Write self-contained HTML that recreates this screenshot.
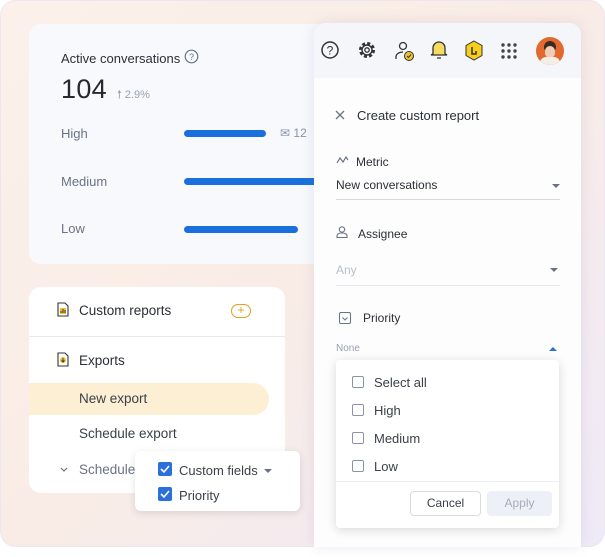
<!DOCTYPE html><html><head><style>
*{box-sizing:border-box;margin:0;padding:0}
body{width:605px;height:557px;background:#fff;font-family:"Liberation Sans",sans-serif;position:relative;overflow:hidden;color:#2b2f36}
.outer{position:absolute;left:0;top:0;width:605px;height:547px;border-radius:16px;background:linear-gradient(135deg,#fbf1ea 0%,#f9ece6 50%,#efeaf8 100%);border:1px solid #ece6ee}
.card1{position:absolute;left:29px;top:24px;width:300px;height:240px;background:#f7f9fd;border-radius:12px}
.abs{position:absolute}
.lbl{font-size:13px;color:#6a7385}
.bar{position:absolute;height:7px;border-radius:4px;background:#1a6fdd}
.card2{position:absolute;left:29px;top:287px;width:256px;height:206px;background:#fff;border-radius:12px}
.panel{position:absolute;left:314px;top:23px;width:267px;height:524px;background:#fdfdfe;border-radius:12px 12px 0 0;box-shadow:0 0 14px rgba(120,110,160,.15);overflow:hidden}
.hdr{height:55px;background:#f4f6fa}
.t13{font-size:13px}
.cb{position:absolute;width:12px;height:12px;border:1.5px solid #8a93a6;border-radius:2px}
.cbx{position:absolute;width:14px;height:14px;background:#2a6fdb;border-radius:2px}
.tri{position:absolute;width:0;height:0;border-left:4px solid transparent;border-right:4px solid transparent}
</style></head><body>
<div class="outer"></div>
<div class="card1">
 <div class="abs" style="left:32px;top:27px;font-size:13px;color:#2b2f36">Active conversations</div>
 <svg class="abs" style="left:155px;top:25px" width="15" height="15" viewBox="0 0 15 15"><circle cx="7.5" cy="7.5" r="6.3" fill="none" stroke="#6a7385" stroke-width="1.2"/><text x="7.5" y="11" font-size="9" text-anchor="middle" fill="#6a7385" font-family="Liberation Sans">?</text></svg>
 <div class="abs" style="left:32px;top:50px;font-size:27px;color:#262a30;letter-spacing:.3px">104</div>
 <div class="abs" style="left:88px;top:62px;font-size:11px;color:#9aa1ae">🠕 2.9%</div>
 <div class="abs lbl" style="left:32px;top:102px">High</div>
 <div class="bar" style="left:155px;top:106px;width:82px"></div>
 <div class="abs" style="left:251px;top:102px;font-size:12px;color:#8a93a6">✉ 12</div>
 <div class="abs lbl" style="left:32px;top:150px">Medium</div>
 <div class="bar" style="left:155px;top:154px;width:150px"></div>
 <div class="abs lbl" style="left:32px;top:197px">Low</div>
 <div class="bar" style="left:155px;top:202px;width:114px"></div>
</div>
<div class="card2">
 <svg class="abs" style="left:28px;top:15px" width="12" height="15" viewBox="0 0 12 15"><path d="M1 1h7l3 3v10H1z" fill="#fff" stroke="#333" stroke-width="1.1"/><rect x="3" y="6" width="6" height="6" fill="#f2c230"/><path d="M4 11V9M6 11V7M8 11V8" stroke="#333" stroke-width="1"/></svg>
 <div class="abs" style="left:50px;top:16px;font-size:13.5px">Custom reports</div>
 <div class="abs" style="left:202px;top:17px;width:20px;height:14px;border:1.3px solid #e0a020;border-radius:8px;color:#e0a020;font-size:12px;line-height:11px;text-align:center">+</div>
 <div class="abs" style="left:0;top:49px;width:256px;height:1px;background:#e6e8ef"></div>
 <svg class="abs" style="left:28px;top:65px" width="12" height="15" viewBox="0 0 12 15"><path d="M1 1h7l3 3v10H1z" fill="#fff" stroke="#333" stroke-width="1.1"/><circle cx="6" cy="8" r="3" fill="#f2c230"/><path d="M6 6v4M4.5 8.5 6 10l1.5-1.5" stroke="#333" stroke-width=".9" fill="none"/></svg>
 <div class="abs" style="left:50px;top:66px;font-size:13.5px">Exports</div>
 <div class="abs" style="left:0;top:96px;width:240px;height:32px;background:#fcefd4;border-radius:0 16px 16px 0"></div>
 <div class="abs" style="left:50px;top:104px;font-size:13.5px;color:#3a3f48">New export</div>
 <div class="abs" style="left:50px;top:139px;font-size:13.5px;color:#3a3f48">Schedule export</div>
 <svg class="abs" style="left:31px;top:180px" width="8" height="6"><path d="M1 1l3 3 3-3" stroke="#6a7385" stroke-width="1.2" fill="none"/></svg>
 <div class="abs" style="left:50px;top:175px;font-size:13.5px;color:#6a7385">Scheduled e</div>
</div>
<div class="abs" style="left:135px;top:451px;width:165px;height:60px;background:#fff;border-radius:6px;box-shadow:0 2px 8px rgba(0,0,0,.12)">
 <div class="cbx" style="left:23px;top:11px"></div><svg class="abs" style="left:25px;top:13px" width="10" height="10"><path d="M1 5l3 3 5-6" stroke="#fff" stroke-width="1.6" fill="none"/></svg>
 <div class="abs t13" style="left:44px;top:12px;color:#3a3f48">Custom fields</div>
 <div class="tri" style="left:129px;top:18px;border-top:4px solid #6a7385"></div>
 <div class="cbx" style="left:23px;top:36px"></div><svg class="abs" style="left:25px;top:38px" width="10" height="10"><path d="M1 5l3 3 5-6" stroke="#fff" stroke-width="1.6" fill="none"/></svg>
 <div class="abs t13" style="left:44px;top:37px;color:#3a3f48">Priority</div>
</div>
<div class="panel">
 <div class="hdr"></div>
 <svg class="abs" style="left:6px;top:17px" width="20" height="20" viewBox="0 0 20 20"><circle cx="10" cy="10" r="8" fill="none" stroke="#333" stroke-width="1.5"/><text x="10" y="14.5" font-size="12" text-anchor="middle" fill="#333" font-family="Liberation Sans">?</text></svg>
 <svg class="abs" style="left:43px;top:17px" width="20" height="20" viewBox="0 0 20 20"><circle cx="10" cy="10" r="6.5" fill="none" stroke="#333" stroke-width="3" stroke-dasharray="3 2.1"/><circle cx="10" cy="10" r="5" fill="none" stroke="#333" stroke-width="1.4"/><circle cx="10" cy="10" r="2.2" fill="none" stroke="#333" stroke-width="1.3"/></svg>
 <svg class="abs" style="left:80px;top:17px" width="22" height="22" viewBox="0 0 22 22"><circle cx="9" cy="6" r="3.5" fill="none" stroke="#333" stroke-width="1.3"/><path d="M2 19v-2c0-3 3-5 7-5" fill="none" stroke="#333" stroke-width="1.3"/><circle cx="15" cy="16" r="4.5" fill="#f2c230" stroke="#333" stroke-width="1"/><path d="M13 16l1.5 1.5 2.5-3" stroke="#333" fill="none"/></svg>
 <svg class="abs" style="left:116px;top:16px" width="18" height="22" viewBox="0 0 18 22"><path d="M3 15V9a6 6 0 0112 0v6l2 1H1z" fill="#f5dc60" stroke="#333" stroke-width="1.3"/><path d="M7 19h4" stroke="#333" stroke-width="1.3"/></svg>
 <svg class="abs" style="left:150px;top:17px" width="20" height="21" viewBox="0 0 20 21"><path d="M10 1l8 4.5v10L10 20l-8-4.5v-10z" fill="#f7cf1a" stroke="#333" stroke-width="1"/><path d="M8 7v7h4v-3" stroke="#333" stroke-width="1.5" fill="none"/></svg>
 <svg class="abs" style="left:187px;top:20px" width="16" height="16"><g fill="#444"><circle cx="2" cy="2" r="1.7"/><circle cx="8" cy="2" r="1.7"/><circle cx="14" cy="2" r="1.7"/><circle cx="2" cy="8" r="1.7"/><circle cx="8" cy="8" r="1.7"/><circle cx="14" cy="8" r="1.7"/><circle cx="2" cy="14" r="1.7"/><circle cx="8" cy="14" r="1.7"/><circle cx="14" cy="14" r="1.7"/></g></svg>
 <div class="abs" style="left:222px;top:14px;width:28px;height:28px;border-radius:50%;overflow:hidden;background:#e2692f"><div class="abs" style="left:8px;top:4px;width:12px;height:9px;border-radius:6px 6px 2px 2px;background:#3a2a22"></div><div class="abs" style="left:9px;top:9px;width:10px;height:12px;border-radius:5px;background:#f0cdb8"></div><div class="abs" style="left:4px;top:20px;width:20px;height:12px;border-radius:8px;background:#f4ede8"></div></div>
 <svg class="abs" style="left:21px;top:87px" width="10" height="10"><path d="M1 1l8 8M9 1l-8 8" stroke="#6a7385" stroke-width="1.3"/></svg>
 <div class="abs" style="left:43px;top:85px;font-size:13px;color:#2b2f36">Create custom report</div>
 <svg class="abs" style="left:22px;top:133px" width="13" height="8"><path d="M1 7l3-5 3 4 3-5 2 3" stroke="#6a7385" stroke-width="1.2" fill="none"/></svg>
 <div class="abs" style="left:42px;top:132px;font-size:12px">Metric</div>
 <div class="abs" style="left:22px;top:155px;font-size:12px">New conversations</div>
 <div class="tri" style="left:238px;top:161px;border-top:4px solid #6a7385"></div>
 <div class="abs" style="left:22px;top:176px;width:224px;height:1px;background:#d8dbe2"></div>
 <svg class="abs" style="left:22px;top:203px" width="12" height="12"><circle cx="6" cy="3.5" r="2.7" fill="none" stroke="#6a7385" stroke-width="1.1"/><path d="M1 11.5v-1.5c0-2 2-3 5-3s5 1 5 3v1.5z" fill="none" stroke="#6a7385" stroke-width="1.1"/></svg>
 <div class="abs" style="left:44px;top:204px;font-size:12px">Assignee</div>
 <div class="abs" style="left:22px;top:240px;font-size:12px;color:#b8bdc8">Any</div>
 <div class="tri" style="left:236px;top:245px;border-top:4px solid #6a7385"></div>
 <div class="abs" style="left:22px;top:262px;width:224px;height:1px;background:#e4e6ec"></div>
 <div class="abs" style="left:25px;top:289px;width:12px;height:12px;border:1.2px solid #6a7385;border-radius:2px"></div>
 <svg class="abs" style="left:28px;top:294px" width="6" height="4"><path d="M.5.5l2.5 2.5 2.5-2.5" stroke="#6a7385" fill="none"/></svg>
 <div class="abs" style="left:49px;top:288px;font-size:12px">Priority</div>
 <div class="abs" style="left:22px;top:320px;font-size:10px;color:#9aa1ae">None</div>
 <div class="tri" style="left:235px;top:324px;border-bottom:4px solid #2a6fdb"></div>
</div>
<div class="abs" style="left:336px;top:360px;width:223px;height:168px;background:#fff;border-radius:4px;box-shadow:0 2px 10px rgba(0,0,0,.15)">
 <div class="cb" style="left:16px;top:16px"></div><div class="abs t13" style="left:38px;top:15px;color:#3a3f48">Select all</div>
 <div class="cb" style="left:16px;top:44px"></div><div class="abs t13" style="left:38px;top:43px;color:#3a3f48">High</div>
 <div class="cb" style="left:16px;top:72px"></div><div class="abs t13" style="left:38px;top:71px;color:#3a3f48">Medium</div>
 <div class="cb" style="left:16px;top:100px"></div><div class="abs t13" style="left:38px;top:99px;color:#3a3f48">Low</div>
 <div class="abs" style="left:0;top:121px;width:223px;height:1px;background:#eceef3"></div>
 <div class="abs" style="left:74px;top:131px;width:71px;height:25px;border:1px solid #d8dbe2;border-radius:4px;font-size:12px;text-align:center;line-height:23px;color:#3a3f48">Cancel</div>
 <div class="abs" style="left:151px;top:131px;width:65px;height:25px;background:#edf0f6;border-radius:4px;font-size:12px;text-align:center;line-height:25px;color:#a6adbb">Apply</div>
</div>
</body></html>
